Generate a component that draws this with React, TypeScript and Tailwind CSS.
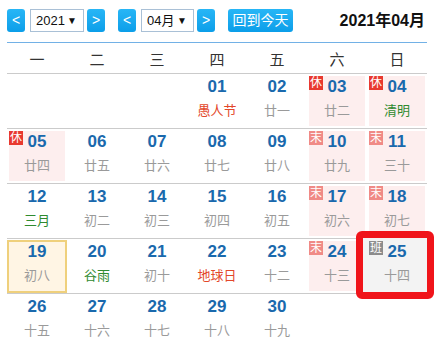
const WEEK = ["一", "二", "三", "四", "五", "六", "日"];

type Day = {
  n: string;
  lunar: string;
  tone?: "red" | "green";
  tag?: "休" | "末" | "班";
  today?: boolean;
  marked?: boolean;
};

const ROWS: (Day | null)[][] = [
  [null, null, null,
    { n: "01", lunar: "愚人节", tone: "red" },
    { n: "02", lunar: "廿一" },
    { n: "03", lunar: "廿二", tag: "休" },
    { n: "04", lunar: "清明", tone: "green", tag: "休" }],
  [{ n: "05", lunar: "廿四", tag: "休" },
    { n: "06", lunar: "廿五" },
    { n: "07", lunar: "廿六" },
    { n: "08", lunar: "廿七" },
    { n: "09", lunar: "廿八" },
    { n: "10", lunar: "廿九", tag: "末" },
    { n: "11", lunar: "三十", tag: "末" }],
  [{ n: "12", lunar: "三月", tone: "green" },
    { n: "13", lunar: "初二" },
    { n: "14", lunar: "初三" },
    { n: "15", lunar: "初四" },
    { n: "16", lunar: "初五" },
    { n: "17", lunar: "初六", tag: "末" },
    { n: "18", lunar: "初七", tag: "末" }],
  [{ n: "19", lunar: "初八", today: true },
    { n: "20", lunar: "谷雨", tone: "green" },
    { n: "21", lunar: "初十" },
    { n: "22", lunar: "地球日", tone: "red" },
    { n: "23", lunar: "十二" },
    { n: "24", lunar: "十三", tag: "末" },
    { n: "25", lunar: "十四", tag: "班", marked: true }],
  [{ n: "26", lunar: "十五" },
    { n: "27", lunar: "十六" },
    { n: "28", lunar: "十七" },
    { n: "29", lunar: "十八" },
    { n: "30", lunar: "十九" },
    null, null],
];

function NavButton({ children }: { children: React.ReactNode }) {
  return (
    <div className="w-[18px] h-[23px] rounded-[3px] bg-gradient-to-b from-[#27b6f6] to-[#0a9ee9] text-white text-[14px] flex items-center justify-center">
      {children}
    </div>
  );
}

function FakeSelect({ value, width }: { value: string; width: string }) {
  return (
    <div className={`relative ${width} h-[23px] border border-[#a9c0d6] bg-white pl-[5px] text-[13px] leading-[21px] text-[#111] whitespace-nowrap`}>
      {value}
      <span className="absolute right-[6px] top-0 text-[10px] leading-[21px]">▼</span>
    </div>
  );
}

function Badge({ tag }: { tag: "休" | "末" | "班" }) {
  const bg = tag === "休" ? "bg-[#e8392f]" : tag === "末" ? "bg-[#f08a86]" : "bg-[#8c8c8c]";
  return (
    <div className={`absolute left-0 top-0 w-[14px] h-[14px] ${bg} text-white text-[12px] leading-[14px] text-center`}>
      {tag}
    </div>
  );
}

function Cell({ day }: { day: Day | null }) {
  if (!day) return <div className="w-[60px]" />;
  const lunarColor =
    day.tone === "red" ? "text-[#e3472a]" : day.tone === "green" ? "text-[#2f8a2f]" : "text-[#9a9a9a]";
  let box = "bg-white";
  if (day.tag === "休" || day.tag === "末") box = "bg-[#fdeeee]";
  if (day.tag === "班") box = "bg-[#f3f3f3]";
  if (day.today) box = "bg-[#fff5e4] border-2 border-[#efd07c]";

  return (
    <div className={`w-[60px] ${day.today ? "pt-[1px]" : "p-[2px]"}`}>
      <div className={`relative h-full ${box} ${day.today ? "pt-[0px]" : "pt-[1px]"} text-center`}>
        {/* red highlight frame drawn around the marked day */}
        {day.marked && (
          <div className="absolute -left-[13px] -right-[9px] -top-[10px] -bottom-[8px] rounded-[6px] border-[7px] border-[#f0141a] bg-[#f3f3f3]" />
        )}
        {day.tag && <Badge tag={day.tag} />}
        <div className="relative text-[17px] leading-[20px] font-bold text-[#1a69ad]">{day.n}</div>
        <div className={`relative mt-[5px] text-[13px] leading-[18px] ${lunarColor}`}>{day.lunar}</div>
      </div>
    </div>
  );
}

export default function App() {
  return (
    <div
      className="w-[435px] h-[347px] overflow-hidden bg-white px-[7px]"
      style={{ fontFamily: '"Liberation Sans", Arial, "Noto Sans CJK SC", sans-serif' }}
    >
      <div className="w-[420px]">
        <div className="h-[43px] border-b border-[#72b1e6] pt-[9px] flex items-start">
          <NavButton>&lt;</NavButton>
          <div className="ml-[5px]">
            <FakeSelect value="2021" width="w-[54px]" />
          </div>
          <div className="ml-[3px]">
            <NavButton>&gt;</NavButton>
          </div>
          <div className="ml-[13px]">
            <NavButton>&lt;</NavButton>
          </div>
          <div className="ml-[5px]">
            <FakeSelect value="04月" width="w-[53px]" />
          </div>
          <div className="ml-[3px]">
            <NavButton>&gt;</NavButton>
          </div>
          <div className="ml-[13px] w-[65px] h-[23px] rounded-[3px] bg-gradient-to-b from-[#27b6f6] to-[#0a9ee9] text-white text-[14px] flex items-center justify-center">
            回到今天
          </div>
          <div className="ml-auto mr-[2px] text-[16px] leading-[23px] font-bold text-[#111]">2021年04月</div>
        </div>

        <div className="h-[31px] border-b border-[#cbcbcb] pt-[5px] flex">
          {WEEK.map((w) => (
            <div key={w} className="w-[60px] text-center text-[15px] leading-[24px] text-[#333]">
              {w}
            </div>
          ))}
        </div>

        {ROWS.map((row, i) => (
          <div key={i} className="h-[55px] border-b border-[#cbcbcb] flex">
            {row.map((d, j) => (
              <Cell key={j} day={d} />
            ))}
          </div>
        ))}
      </div>
    </div>
  );
}
